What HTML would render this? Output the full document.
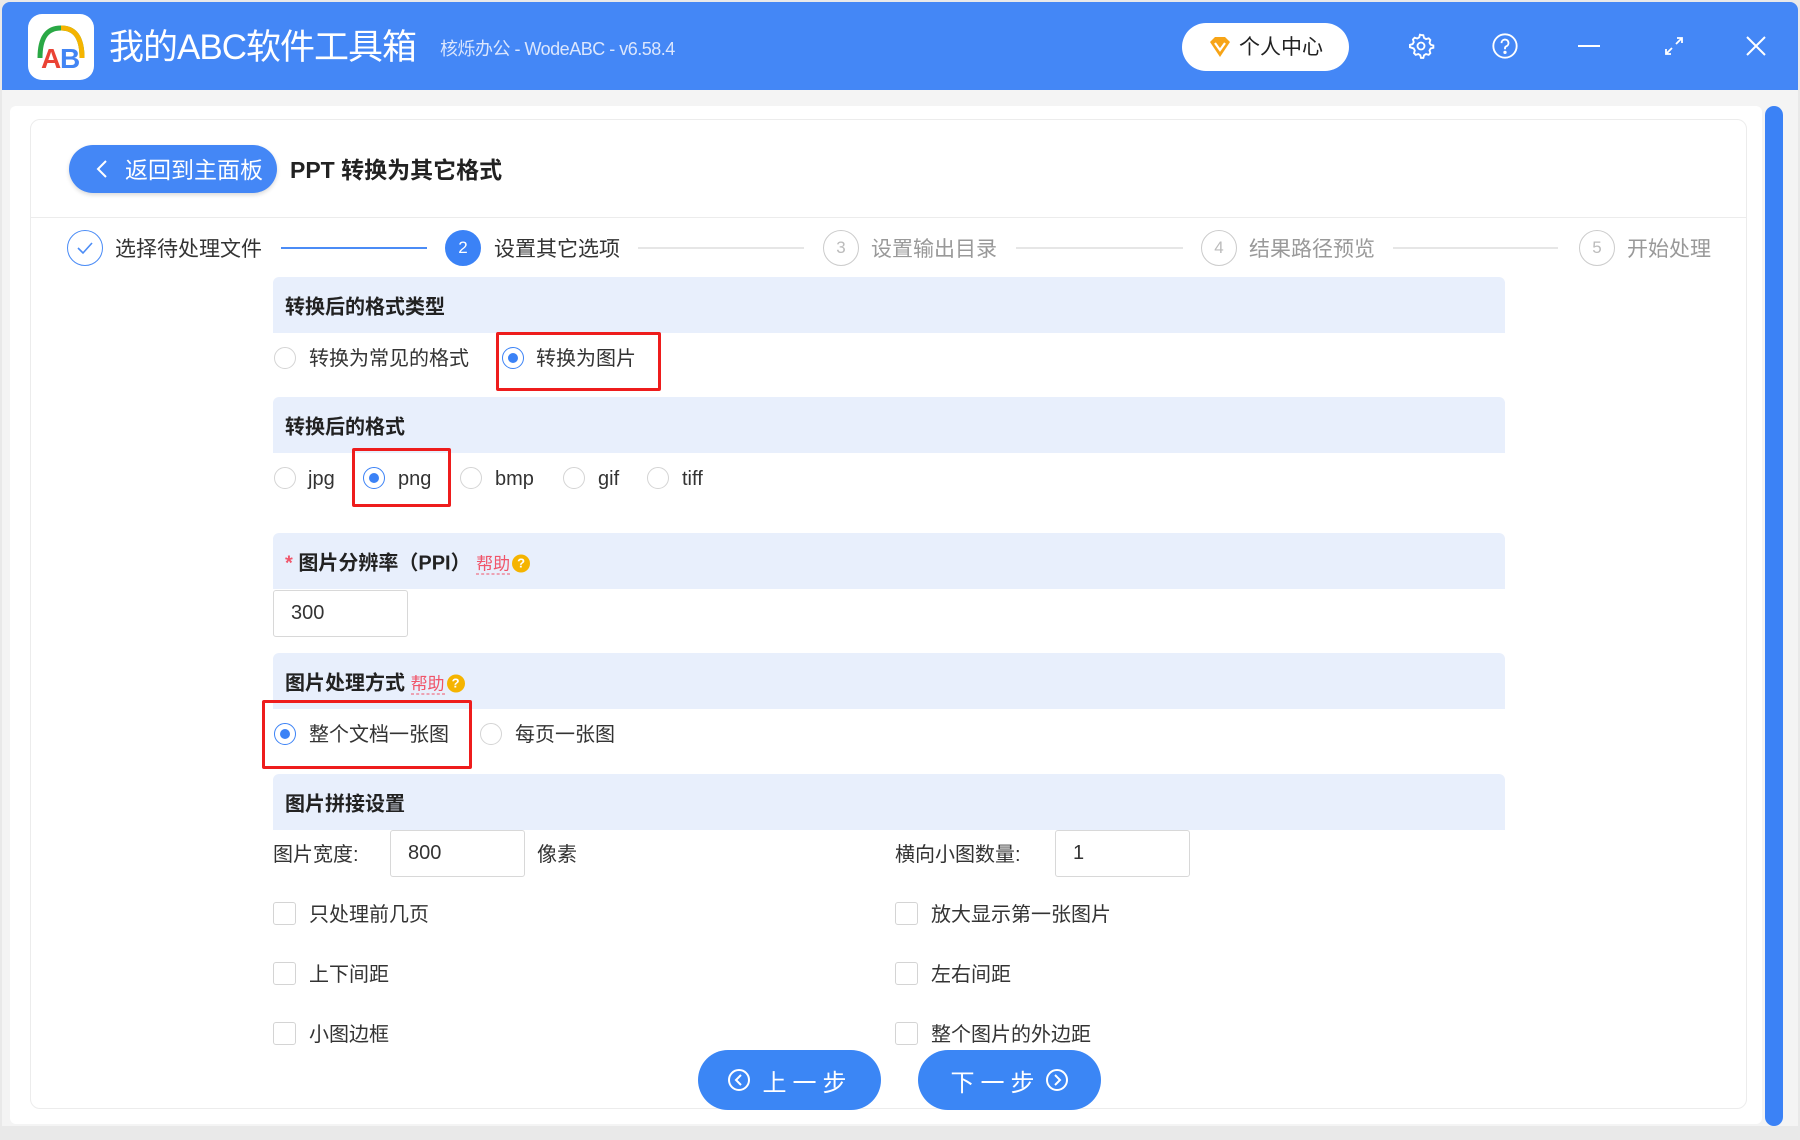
<!DOCTYPE html>
<html><head><meta charset="utf-8"><style>
*{margin:0;padding:0;box-sizing:border-box}
body{width:1800px;height:1140px;overflow:hidden;background:#e9e9e9;font-family:"Liberation Sans","Noto Sans CJK SC",sans-serif;position:relative;color:#333}
.a{position:absolute}
.hdr{left:2px;top:2px;width:1796px;height:88px;background:#4487f6;border-radius:8px 8px 0 0}
.t{white-space:nowrap;line-height:1}
.sec{position:absolute;left:273px;width:1232px;background:#e8effc;border-radius:6px 6px 0 0}
.sec > span{position:absolute;left:12px;top:50%;transform:translateY(-50%);font-size:20px;font-weight:bold;color:#222;white-space:nowrap}
.rad{position:absolute;width:22px;height:22px;border:1px solid #d4d4d4;border-radius:50%;background:#fff}
.rad.on{border-color:#3b82f6}
.rad.on::after{content:"";position:absolute;left:5px;top:5px;width:10px;height:10px;border-radius:50%;background:#3b82f6}
.lbl{position:absolute;font-size:20px;color:#333;white-space:nowrap;line-height:1}
.red{position:absolute;border:3px solid #ee1c1c;border-radius:2px}
.inp{position:absolute;border:1px solid #d8d8d8;border-radius:3px;background:#fff;font-size:20px;color:#333;padding-left:17px;display:flex;align-items:center}
.cb{position:absolute;width:23px;height:23px;border:1px solid #d4d4d4;border-radius:3px;background:#fff}
.stc{position:absolute;width:36px;height:36px;border-radius:50%;border:1px solid #ccc;color:#bbb;font-size:17px;display:flex;align-items:center;justify-content:center}
.stt{position:absolute;font-size:21px;color:#999;white-space:nowrap;line-height:1}
.ln{position:absolute;height:2px;background:#e6e6e6}
.help{color:#f0556a;font-size:17px;border-bottom:1px dashed #f0556a;font-weight:normal}
.q{display:inline-block;width:18px;height:18px;border-radius:50%;background:#f5b400;color:#fff;font-size:13px;text-align:center;line-height:18px;font-weight:bold;vertical-align:2px;margin-left:2px}
.btn{position:absolute;top:1050px;width:183px;height:60px;border-radius:30px;background:#3b86f5;color:#fff;font-size:24px;display:flex;align-items:center;justify-content:center;letter-spacing:6px}
</style></head><body>
<div class="a hdr"></div>
<div class="a" style="left:28px;top:14px;width:66px;height:66px;background:#fff;border-radius:14px"></div>
<svg class="a" style="left:28px;top:14px" width="66" height="66" viewBox="0 0 66 66">
<path d="M12 44 C12 22 20 14 33 14 C46 14 54 22 54 44" fill="none" stroke="#2aa845" stroke-width="5"/>
<path d="M33 14 C46 14 54 22 54 44" fill="none" stroke="#f5b400" stroke-width="5"/>
<text x="13" y="54" font-size="28" font-weight="bold" fill="#ea4335" font-family="Liberation Sans">A</text>
<text x="32" y="54" font-size="28" font-weight="bold" fill="#4285f4" font-family="Liberation Sans">B</text>
</svg>
<div class="a t" style="left:109px;top:30px;font-size:35px;color:#fff;letter-spacing:-1px">我的ABC软件工具箱</div>
<div class="a t" style="left:440px;top:40px;font-size:18px;color:#dbe6fd;letter-spacing:-0.5px">核烁办公 - WodeABC - v6.58.4</div>
<div class="a" style="left:1182px;top:23px;width:167px;height:48px;background:#fff;border-radius:24px"></div>
<svg class="a" style="left:1208px;top:35px" width="24" height="24" viewBox="0 0 24 24"><path d="M2 7 L7 2 H17 L22 7 L12 22 Z" fill="#f7a416"/><path d="M7 8 L12 15 L17 8" fill="none" stroke="#fff" stroke-width="2.2"/></svg>
<div class="a t" style="left:1239px;top:37px;font-size:21px;color:#222">个人中心</div>
<svg class="a" style="left:1407px;top:32px" width="28" height="28" viewBox="0 0 24 24" fill="none" stroke="#fff" stroke-width="1.6"><circle cx="12" cy="12" r="3"/><path d="M12 2.5l2 .3.6 2.3 1.7 1 2.3-.7 1.4 1.5-.7 2.3 1 1.7 2.3.6v2l-2.3.6-1 1.7.7 2.3-1.4 1.5-2.3-.7-1.7 1-.6 2.3h-2l-.6-2.3-1.7-1-2.3.7-1.4-1.5.7-2.3-1-1.7L2.5 13v-2l2.3-.6 1-1.7-.7-2.3 1.4-1.5 2.3.7 1.7-1 .6-2.3z"/></svg>
<svg class="a" style="left:1491px;top:32px" width="28" height="28" viewBox="0 0 24 24" fill="none" stroke="#fff" stroke-width="1.6"><circle cx="12" cy="12" r="10"/><path d="M9 9.5a3 3 0 1 1 4 2.8c-.8.4-1 1-1 1.7v.8"/><circle cx="12" cy="17.5" r=".6" fill="#fff"/></svg>
<div class="a" style="left:1578px;top:45px;width:22px;height:2px;background:#fff"></div>
<svg class="a" style="left:1662px;top:34px" width="24" height="24" viewBox="0 0 24 24" fill="none" stroke="#fff" stroke-width="1.8"><path d="M4 20L10 14M14 10L20 4M15 4h5v5M4 15v5h5"/></svg>
<svg class="a" style="left:1745px;top:35px" width="22" height="22" viewBox="0 0 22 22" stroke="#fff" stroke-width="2"><path d="M2 2L20 20M20 2L2 20"/></svg>
<div class="a" style="left:2px;top:90px;width:1796px;height:1036px;background:#f4f4f4"></div>
<div class="a" style="left:10px;top:106px;width:1752px;height:1018px;background:#fff;border-radius:6px"></div>
<div class="a" style="left:30px;top:119px;width:1717px;height:990px;border:1px solid #ececec;border-radius:10px"></div>
<div class="a" style="left:1765px;top:106px;width:18px;height:1020px;background:#3b82f6;border-radius:9px"></div>
<div class="a" style="left:69px;top:145px;width:208px;height:48px;background:#4487f6;border-radius:24px;box-shadow:0 2px 4px rgba(0,0,0,.15)"></div>
<svg class="a" style="left:95px;top:159px" width="14" height="20" viewBox="0 0 14 20"><path d="M11 2L3 10l8 8" fill="none" stroke="#fff" stroke-width="2"/></svg>
<div class="a t" style="left:125px;top:159px;font-size:23px;color:#fff">返回到主面板</div>
<div class="a t" style="left:290px;top:159px;font-size:23px;font-weight:bold;color:#222">PPT 转换为其它格式</div>
<div class="a" style="left:31px;top:217px;width:1715px;height:1px;background:#ececec"></div>
<div class="stc" style="left:67px;top:230px;border-color:#4b8cf6"><svg width="18" height="14" viewBox="0 0 18 14"><path d="M2 7l5 5 9-10" fill="none" stroke="#4b8cf6" stroke-width="1.6"/></svg></div>
<div class="stt" style="left:115px;top:239px;color:#333">选择待处理文件</div>
<div class="ln" style="left:281px;top:247px;width:146px;background:#4b8cf6"></div>
<div class="stc" style="left:445px;top:230px;background:#3b82f6;border-color:#3b82f6;color:#fff">2</div>
<div class="stt" style="left:494px;top:239px;color:#333">设置其它选项</div>
<div class="ln" style="left:638px;top:247px;width:166px"></div>
<div class="stc" style="left:823px;top:230px">3</div>
<div class="stt" style="left:871px;top:239px">设置输出目录</div>
<div class="ln" style="left:1016px;top:247px;width:167px"></div>
<div class="stc" style="left:1201px;top:230px">4</div>
<div class="stt" style="left:1249px;top:239px">结果路径预览</div>
<div class="ln" style="left:1393px;top:247px;width:165px"></div>
<div class="stc" style="left:1579px;top:230px">5</div>
<div class="stt" style="left:1627px;top:239px">开始处理</div>

<div class="sec" style="top:277px;height:56px"><span>转换后的格式类型</span></div>
<div class="rad" style="left:274px;top:347px"></div><div class="lbl" style="left:309px;top:349px">转换为常见的格式</div>
<div class="rad on" style="left:502px;top:347px"></div><div class="lbl" style="left:536px;top:349px">转换为图片</div>
<div class="red" style="left:496px;top:332px;width:165px;height:59px"></div>

<div class="sec" style="top:397px;height:56px"><span>转换后的格式</span></div>
<div class="rad" style="left:274px;top:467px"></div><div class="lbl" style="left:308px;top:469px">jpg</div>
<div class="rad on" style="left:363px;top:467px"></div><div class="lbl" style="left:398px;top:469px">png</div>
<div class="rad" style="left:460px;top:467px"></div><div class="lbl" style="left:495px;top:469px">bmp</div>
<div class="rad" style="left:563px;top:467px"></div><div class="lbl" style="left:598px;top:469px">gif</div>
<div class="rad" style="left:647px;top:467px"></div><div class="lbl" style="left:682px;top:469px">tiff</div>
<div class="red" style="left:352px;top:448px;width:99px;height:59px"></div>

<div class="sec" style="top:533px;height:56px"><span><b style="color:#f0556a">*</b> 图片分辨率（PPI） <span class="help">帮助</span><span class="q">?</span></span></div>
<div class="inp" style="left:273px;top:590px;width:135px;height:47px">300</div>

<div class="sec" style="top:653px;height:56px"><span>图片处理方式 <span class="help">帮助</span><span class="q">?</span></span></div>
<div class="rad on" style="left:274px;top:723px"></div><div class="lbl" style="left:309px;top:725px">整个文档一张图</div>
<div class="rad" style="left:480px;top:723px"></div><div class="lbl" style="left:515px;top:725px">每页一张图</div>
<div class="red" style="left:262px;top:700px;width:210px;height:69px"></div>

<div class="sec" style="top:774px;height:56px"><span>图片拼接设置</span></div>
<div class="lbl" style="left:273px;top:845px">图片宽度:</div>
<div class="inp" style="left:390px;top:830px;width:135px;height:47px">800</div>
<div class="lbl" style="left:537px;top:845px">像素</div>
<div class="lbl" style="left:895px;top:845px">横向小图数量:</div>
<div class="inp" style="left:1055px;top:830px;width:135px;height:47px">1</div>
<div class="cb" style="left:273px;top:902px"></div><div class="lbl" style="left:309px;top:905px">只处理前几页</div>
<div class="cb" style="left:895px;top:902px"></div><div class="lbl" style="left:931px;top:905px">放大显示第一张图片</div>
<div class="cb" style="left:273px;top:962px"></div><div class="lbl" style="left:309px;top:965px">上下间距</div>
<div class="cb" style="left:895px;top:962px"></div><div class="lbl" style="left:931px;top:965px">左右间距</div>
<div class="cb" style="left:273px;top:1022px"></div><div class="lbl" style="left:309px;top:1025px">小图边框</div>
<div class="cb" style="left:895px;top:1022px"></div><div class="lbl" style="left:931px;top:1025px">整个图片的外边距</div>

<div class="btn" style="left:698px"><svg width="24" height="24" viewBox="0 0 24 24" style="margin-right:12px"><circle cx="12" cy="12" r="10" fill="none" stroke="#fff" stroke-width="2"/><path d="M14 7l-5 5 5 5" fill="none" stroke="#fff" stroke-width="2"/></svg>上一步</div>
<div class="btn" style="left:918px">下一步<svg width="24" height="24" viewBox="0 0 24 24" style="margin-left:4px"><circle cx="12" cy="12" r="10" fill="none" stroke="#fff" stroke-width="2"/><path d="M10 7l5 5-5 5" fill="none" stroke="#fff" stroke-width="2"/></svg></div>
</body></html>
